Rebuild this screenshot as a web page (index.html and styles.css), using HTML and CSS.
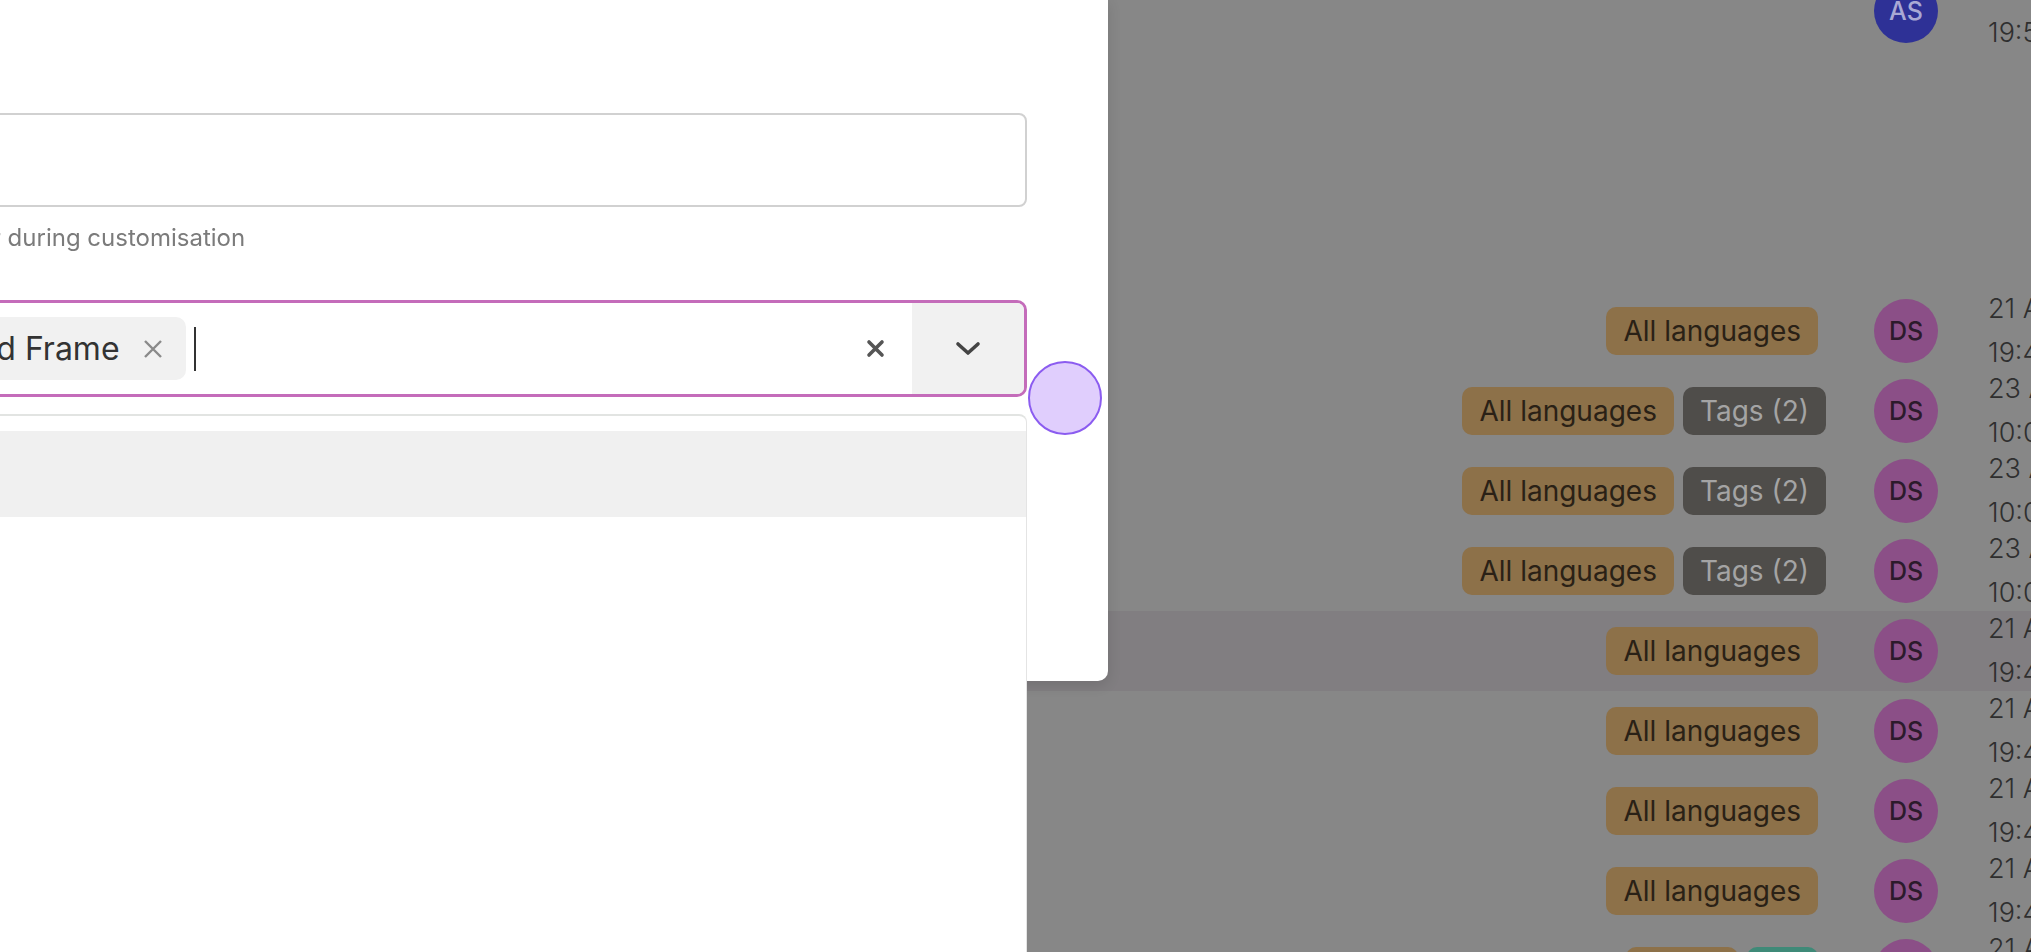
FILE: index.html
```html
<!DOCTYPE html>
<html lang="en">

<head>
    <meta charset="UTF-8">
    <meta name="viewport" content="width=device-width, initial-scale=1.0">
    <title>Frames</title>
    <link rel="stylesheet" href="styles.css">
</head>

<body>
    <!-- page behind the dialog (dimmed) -->
    <ul class="list">
        <li class="row">
            <div class="chips"></div>
            <span class="avatar blue">AS</span>
            <div class="date"><span>20 Apr 2023</span><span>19:52</span></div>
        </li>
        <li class="row-gap"></li>
        <li class="row">
            <div class="chips"><span class="chip lang">All languages</span></div>
            <span class="avatar">DS</span>
            <div class="date"><span>21 Apr 2023</span><span>19:47</span></div>
        </li>
        <li class="row">
            <div class="chips"><span class="chip lang">All languages</span><span class="chip tags">Tags (2)</span></div>
            <span class="avatar">DS</span>
            <div class="date"><span>23 Apr 2023</span><span>10:02</span></div>
        </li>
        <li class="row">
            <div class="chips"><span class="chip lang">All languages</span><span class="chip tags">Tags (2)</span></div>
            <span class="avatar">DS</span>
            <div class="date"><span>23 Apr 2023</span><span>10:01</span></div>
        </li>
        <li class="row">
            <div class="chips"><span class="chip lang">All languages</span><span class="chip tags">Tags (2)</span></div>
            <span class="avatar">DS</span>
            <div class="date"><span>23 Apr 2023</span><span>10:00</span></div>
        </li>
        <li class="row hover">
            <div class="chips"><span class="chip lang">All languages</span></div>
            <span class="avatar">DS</span>
            <div class="date"><span>21 Apr 2023</span><span>19:46</span></div>
        </li>
        <li class="row">
            <div class="chips"><span class="chip lang">All languages</span></div>
            <span class="avatar">DS</span>
            <div class="date"><span>21 Apr 2023</span><span>19:45</span></div>
        </li>
        <li class="row">
            <div class="chips"><span class="chip lang">All languages</span></div>
            <span class="avatar">DS</span>
            <div class="date"><span>21 Apr 2023</span><span>19:44</span></div>
        </li>
        <li class="row">
            <div class="chips"><span class="chip lang">All languages</span></div>
            <span class="avatar">DS</span>
            <div class="date"><span>21 Apr 2023</span><span>19:43</span></div>
        </li>
        <li class="row">
            <div class="chips"><span class="chip lang">Dutch</span><span class="chip teal">NL</span></div>
            <span class="avatar">DS</span>
            <div class="date"><span>21 Apr 2023</span><span>19:41</span></div>
        </li>
    </ul>

    <!-- dialog -->
    <div class="modal">
        <div class="field">
            <input class="text-input" type="text">
            <p class="help">Label shown to the customer during customisation</p>
        </div>

        <div class="field select-wrap">
            <div class="select">
                <div class="values">
                    <span class="tag">Wood Frame
                        <svg class="tag-x" width="20" height="20" viewBox="0 0 20 20">
                            <path d="M2 2 L18 18 M18 2 L2 18" stroke="#8a8a8a" stroke-width="2.4" />
                        </svg>
                    </span>
                    <span class="caret"></span>
                </div>
                <span class="clear">
                    <svg width="19" height="19" viewBox="0 0 19 19">
                        <path d="M3 3 L16 16 M16 3 L3 16" stroke="#555" stroke-width="3.6" stroke-linecap="round" />
                    </svg>
                </span>
                <span class="toggle">
                    <svg width="26" height="16" viewBox="0 0 26 16">
                        <path d="M3 3 L13 12 L23 3" fill="none" stroke="#444" stroke-width="3.6" stroke-linecap="round" stroke-linejoin="round" />
                    </svg>
                </span>
            </div>
            <ul class="menu">
                <li class="option active">Gold Frame</li>
                <li class="option">Silver Frame</li>
                <li class="option">Black Frame</li>
            </ul>
        </div>
    </div>

    <div class="touch"></div>
</body>

</html>
```

FILE: styles.css
```css
body {
    font-family: Inter, "Noto Sans", sans-serif;
    margin: 0;
    padding: 0;
    background-color: #878787;
    overflow: hidden;
    height: 952px;
}

/* list behind the dialog */
.list {
    list-style: none;
    width: 2160px;
    margin: -29px 0 0;
    padding: 0;
}

.row {
    display: flex;
    align-items: center;
    height: 80px;
}

.row.hover {
    background-color: #817e81;
}

.row-gap {
    height: 240px;
}

.chips {
    flex: 1;
    display: flex;
    justify-content: flex-end;
    gap: 9px;
    margin-right: 48px;
}

.chip {
    height: 48px;
    line-height: 48px;
    padding: 0 17px;
    border-radius: 10px;
    font-size: 28px;
    white-space: nowrap;
}

.chip:last-child {
    margin-right: 8px;
}

.chip.lang {
    background-color: #8d7149;
    color: #2a2116;
}

.chip.tags {
    background-color: #4f4d4a;
    color: #a4a4a4;
    margin-right: 0;
}

.chip.teal {
    background-color: #3f8a78;
    color: #1d2f2a;
}

.avatar {
    width: 64px;
    height: 64px;
    border-radius: 50%;
    margin-right: 50px;
    background-color: #8b4f87;
    color: #2c1a2b;
    font-size: 25px;
    font-weight: 500;
    display: flex;
    align-items: center;
    justify-content: center;
    flex-shrink: 0;
}

.avatar.blue {
    background-color: #2e3196;
    color: #a9a9d4;
}

.date {
    width: 172px;
    display: flex;
    flex-direction: column;
    font-size: 27px;
    font-weight: 300;
    line-height: 44px;
    color: #2f2f2f;
    white-space: nowrap;
}

/* dialog */
.modal {
    position: fixed;
    top: 0;
    left: -408px;
    width: 1516px;
    height: 681px;
    box-sizing: border-box;
    padding: 113px 81px 0;
    background: #fff;
    border-radius: 0 0 10px 0;
    box-shadow: 0 4px 14px rgba(0, 0, 0, 0.12);
    z-index: 2;
}

.text-input {
    display: block;
    width: 100%;
    height: 94px;
    box-sizing: border-box;
    border: 2px solid #d1d1d1;
    border-radius: 8px;
    margin: 0;
}

.help {
    margin: 16px 0 0;
    font-size: 24px;
    line-height: 30px;
    color: #7b7b7b;
    white-space: nowrap;
}

.select-wrap {
    position: relative;
    margin-top: 47px;
}

.select {
    display: flex;
    height: 97px;
    box-sizing: border-box;
    border: 3px solid #c46cba;
    border-radius: 10px;
    overflow: hidden;
}

.values {
    flex: 1;
    display: flex;
    align-items: center;
    gap: 8px;
    padding-left: 228px;
}

.tag {
    display: flex;
    align-items: center;
    gap: 23px;
    height: 63px;
    padding: 0 23px 0 24px;
    border-radius: 10px;
    background-color: #f1f1f1;
    color: #333;
    font-size: 32px;
    white-space: nowrap;
}

.caret {
    width: 2px;
    height: 44px;
    background-color: #333;
}

.clear {
    display: flex;
    align-items: center;
    padding: 0 27px 0 20px;
}

.toggle {
    width: 112px;
    display: flex;
    align-items: center;
    justify-content: center;
    background-color: #f1f1f1;
}

.menu {
    position: absolute;
    top: calc(100% + 17px);
    left: 0;
    right: 0;
    height: 640px;
    list-style: none;
    margin: 0;
    padding: 15px 0 0;
    background: #fff;
    border: 1px solid #e4e4e4;
    border-top: 2px solid #e2e4e2;
    border-radius: 8px 8px 0 0;
}

.option {
    height: 86px;
    line-height: 86px;
    padding: 0 20px;
    font-size: 24px;
    color: #333;
}

.option.active {
    background-color: #f0f0f0;
}

/* pointer highlight */
.touch {
    position: fixed;
    left: 1028px;
    top: 361px;
    width: 74px;
    height: 74px;
    box-sizing: border-box;
    border-radius: 50%;
    background-color: #e0cefd;
    border: 2px solid #8b5cf0;
    z-index: 3;
}
```
